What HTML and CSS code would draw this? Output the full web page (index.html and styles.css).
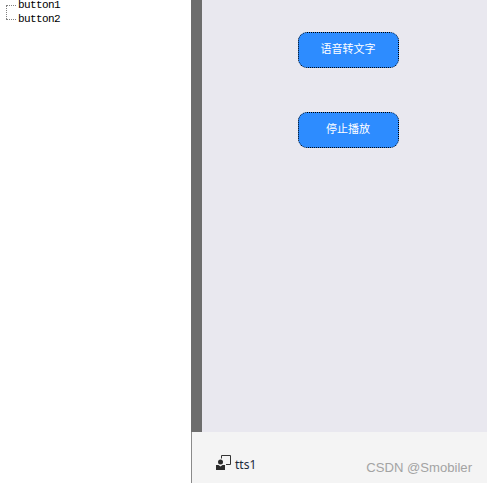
FILE: index.html
```html
<!DOCTYPE html>
<html lang="zh-CN">
<head>
    <meta charset="UTF-8">
    <meta name="viewport" content="width=device-width, initial-scale=1.0">
    <title>tts1</title>
    <link rel="stylesheet" href="styles.css">
</head>
<body>
    <div class="designer">
        <!-- 控件树 -->
        <ul class="tree">
            <li class="tree-item">button1</li>
            <li class="tree-item">button2</li>
        </ul>
        <div class="work-area">
            <div class="form-row">
                <div class="splitter"></div>
                <div class="form">
                    <button class="form-button">语音转文字</button>
                    <button class="form-button">停止播放</button>
                </div>
            </div>
            <div class="tray">
                <div class="tray-item">
                    <svg class="tray-icon" width="16" height="15" viewBox="0 0 16 15">
                        <path d="M5.500 3.500V.5H14.500V9.500H10" fill="none" stroke="#333" stroke-width="1"/>
                        <circle cx="4.500" cy="7" r="2.500" fill="#2b2b2b"/>
                        <path d="M0 10h2.500l2 1.500 2-1.500H9v5H0z" fill="#2b2b2b"/>
                    </svg>
                    <span>tts1</span>
                </div>
                <span class="watermark">CSDN @Smobiler</span>
            </div>
        </div>
    </div>
</body>
</html>
```

FILE: styles.css
```css
/* Reset básico */
body, ul, button {
    margin: 0;
    padding: 0;
    box-sizing: border-box;
}

body {
    background: #fff;
    overflow: hidden;
}

.designer {
    display: flex;
    width: 487px;
    height: 483px;
}

/* Árvore de controles */
.tree {
    flex: 0 0 191px;
    display: flex;
    flex-direction: column;
    gap: 4px;
    list-style: none;
    padding-left: 6px;
    font-family: "Liberation Mono", monospace;
    font-size: 11px;
    line-height: 10px;
    letter-spacing: -0.6px;
    color: #000;
}

.tree-item {
    display: flex;
    align-items: center;
    height: 10px;
}

.tree-item::before {
    content: "";
    width: 10px;
    margin-right: 2px;
    border-top: 1px dotted #808080;
}

.tree-item:last-child {
    position: relative;
}

/* Linha vertical que liga os dois itens */
.tree-item:last-child::after {
    content: "";
    position: absolute;
    left: 0;
    top: -9px;
    height: 14px;
    border-left: 1px dotted #808080;
}

.work-area {
    flex: 1;
    display: flex;
    flex-direction: column;
}

.form-row {
    display: flex;
    height: 432px;
}

.splitter {
    width: 11px;
    background: #6d6d6d;
}

.form {
    flex: 1;
    display: flex;
    flex-direction: column;
    align-items: center;
    gap: 44px;
    padding-top: 32px;
    padding-left: 7px;
    background: #e9e8ef;
}

.form-button {
    width: 101px;
    height: 36px;
    border: 1px dotted #000;
    border-radius: 9px;
    background: #2d8cff;
    color: #fff;
    font-family: "Noto Sans CJK SC", sans-serif;
    font-size: 11px;
    padding-bottom: 4px;
}

/* Bandeja inferior */
.tray {
    flex: 1;
    display: flex;
    justify-content: space-between;
    background: #f4f4f4;
    border-left: 1px solid #8a8a8a;
    padding: 24px 15px 0 24px;
}

.tray-item {
    display: flex;
    align-items: flex-start;
    gap: 3px;
    font-family: "Noto Sans", sans-serif;
    font-size: 12px;
    color: #1b2a3a;
}

.tray-icon {
    margin-top: -1px;
}

.watermark {
    margin-top: 4px;
    font-family: "Liberation Sans", sans-serif;
    font-size: 13.100px;
    color: #a3a3a3;
}
```
